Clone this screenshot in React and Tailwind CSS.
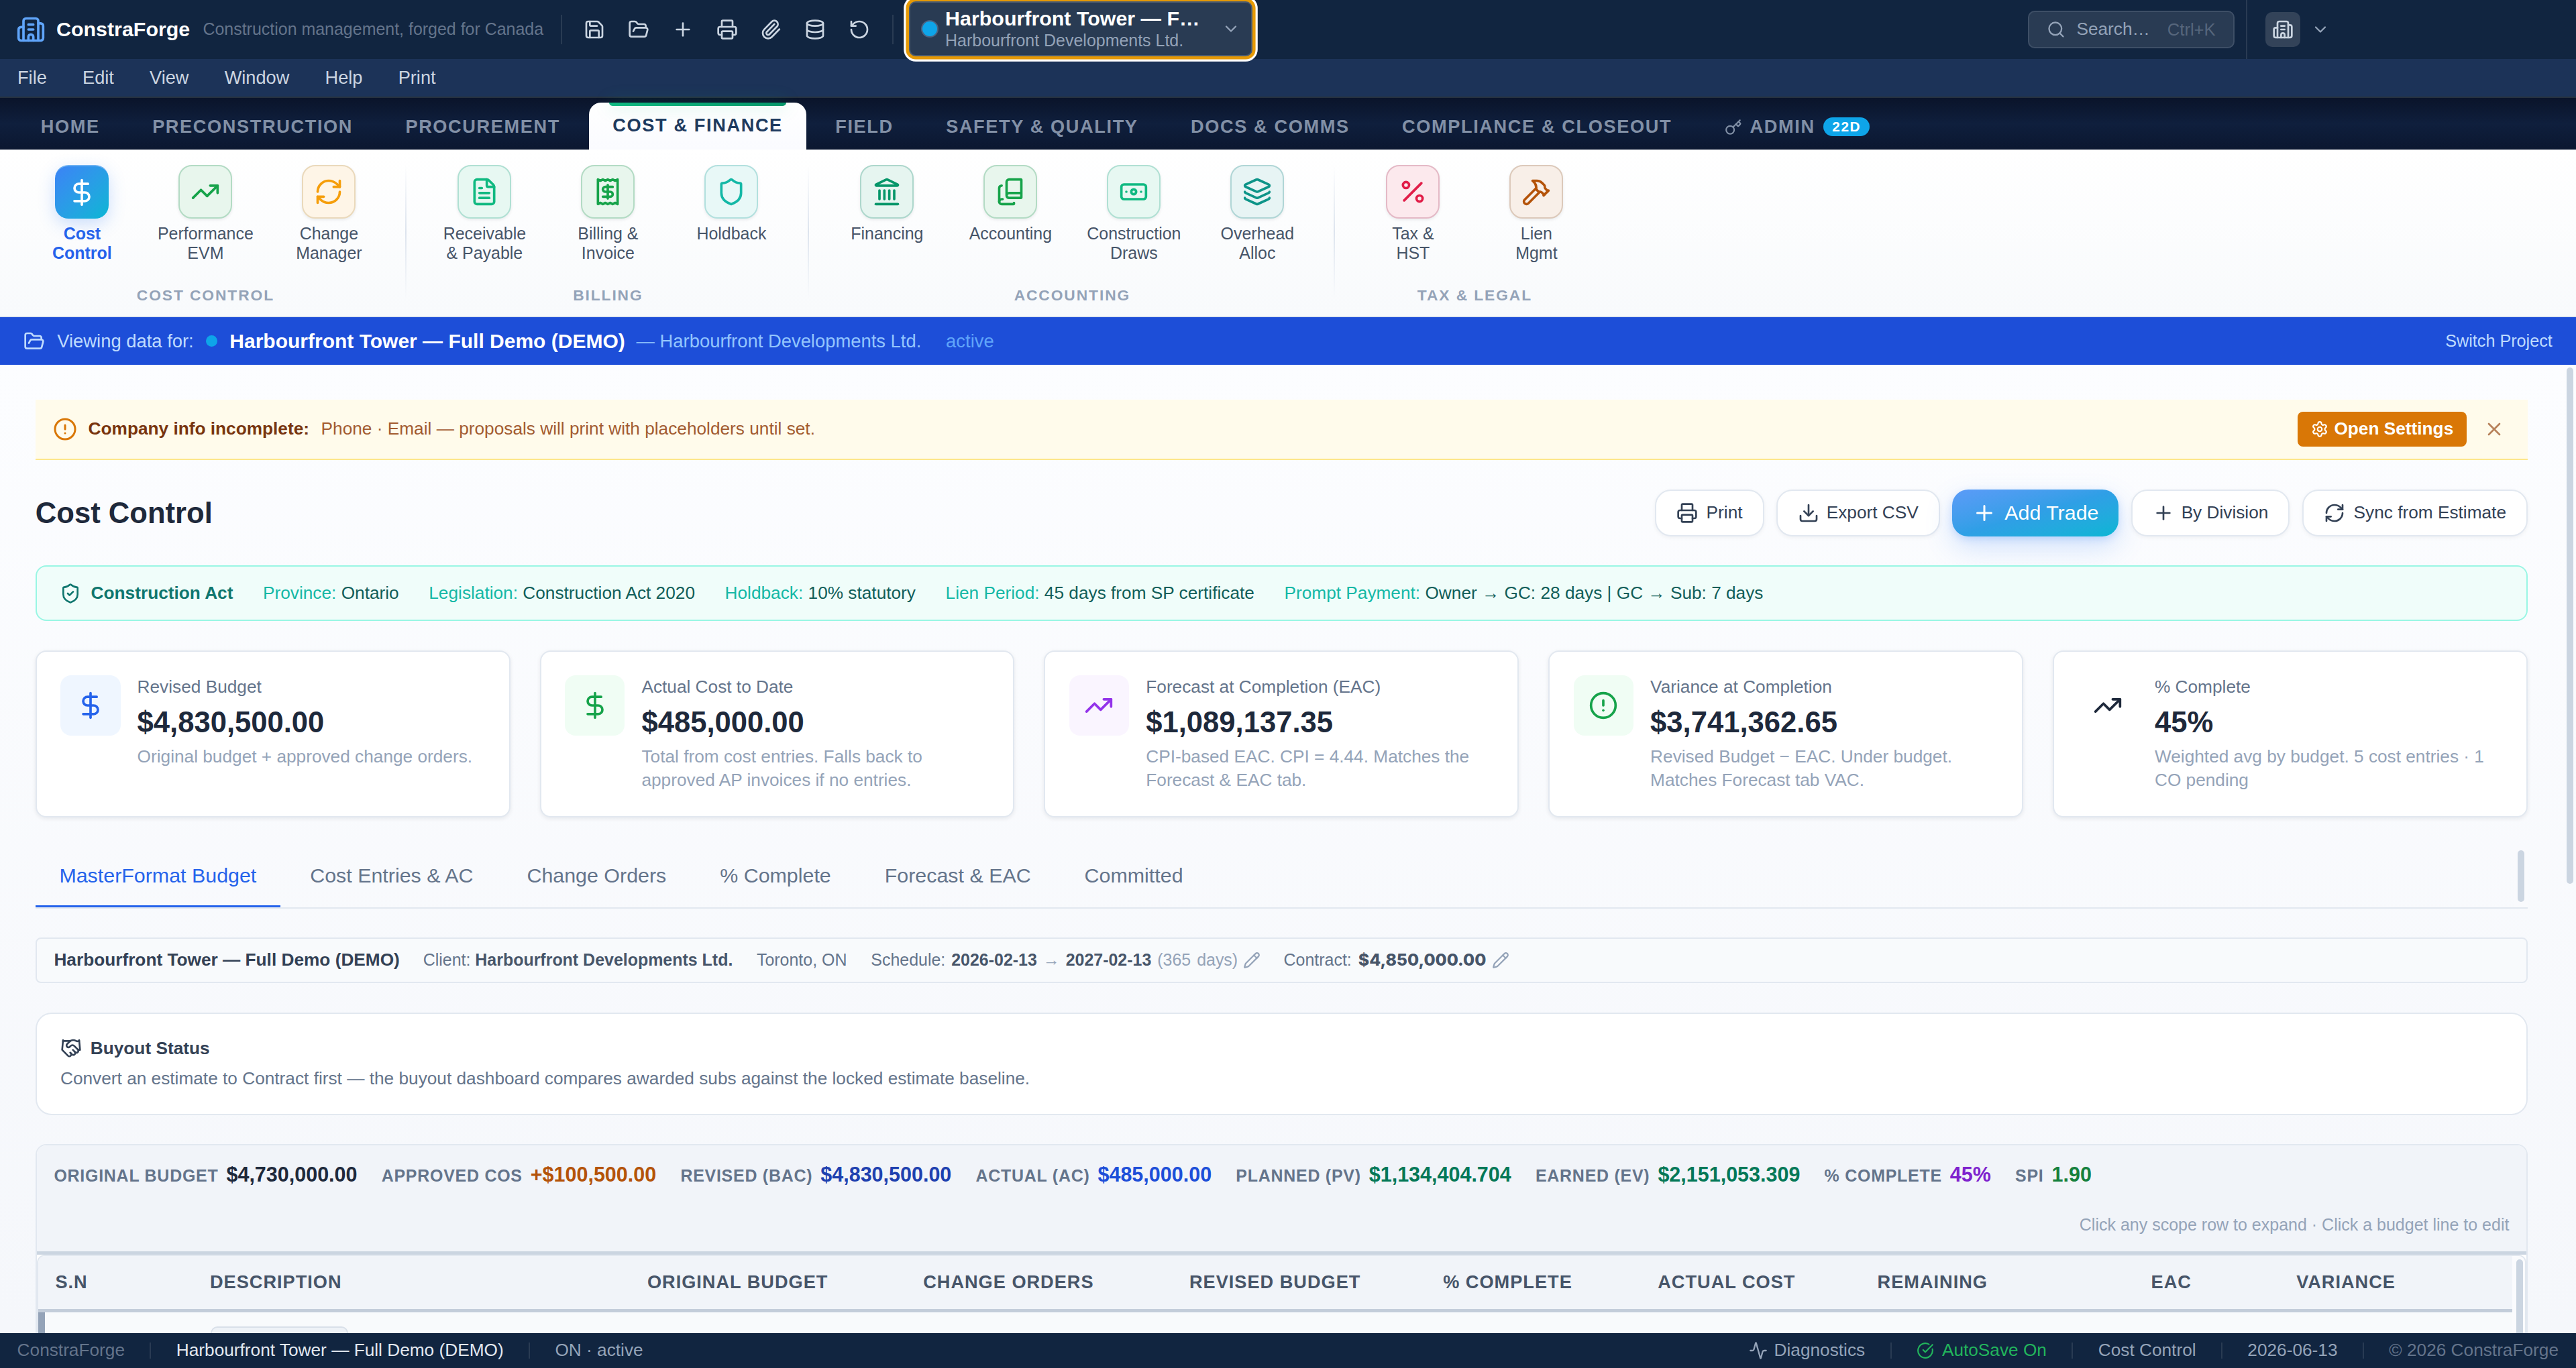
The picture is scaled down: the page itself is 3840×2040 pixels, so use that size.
import React from "react";
import {
  Building2, Save, FolderOpen, Plus, Printer, Paperclip, Database, RotateCcw, ChevronDown, Search, Key,
  DollarSign, TrendingUp, RefreshCw, FileText, Receipt, Shield, Landmark, BookCopy, Banknote, Layers,
  Percent, Hammer, CircleAlert, Settings, X, Download, ShieldCheck, Pencil, Handshake, Activity, CircleCheckBig,
} from "lucide-react";

const quickActions = [Save, FolderOpen, Plus, Printer, Paperclip, Database, RotateCcw];
const menus = ["File", "Edit", "View", "Window", "Help", "Print"];

const ribbon = [
  {
    label: "COST CONTROL",
    items: [
      { icon: DollarSign, lines: ["Cost", "Control"], active: true },
      { icon: TrendingUp, lines: ["Performance", "EVM"], tone: "text-[#16a34a] bg-[#e8f6ed] border-[#b3dbc4]" },
      { icon: RefreshCw, lines: ["Change", "Manager"], tone: "text-[#f59e0b] bg-[#fef5e7] border-[#ead9bb]" },
    ],
  },
  {
    label: "BILLING",
    items: [
      { icon: FileText, lines: ["Receivable", "& Payable"], tone: "text-[#10b981] bg-[#e7f8f2] border-[#b0e0d3]" },
      { icon: Receipt, lines: ["Billing &", "Invoice"], tone: "text-[#16a34a] bg-[#e8f6ed] border-[#b3dbc4]" },
      { icon: Shield, lines: ["Holdback"], tone: "text-[#14b8a6] bg-[#e8f8f7] border-[#b2e0de]" },
    ],
  },
  {
    label: "ACCOUNTING",
    items: [
      { icon: Landmark, lines: ["Financing"], tone: "text-[#059669] bg-[#e6f5f0] border-[#add7cc]" },
      { icon: BookCopy, lines: ["Accounting"], tone: "text-[#16a34a] bg-[#e8f6ed] border-[#b3dbc4]" },
      { icon: Banknote, lines: ["Construction", "Draws"], tone: "text-[#10b981] bg-[#e7f8f2] border-[#b0e0d3]" },
      { icon: Layers, lines: ["Overhead", "Alloc"], tone: "text-[#0d9488] bg-[#e7f4f4] border-[#b0d6d6]" },
    ],
  },
  {
    label: "TAX & LEGAL",
    items: [
      { icon: Percent, lines: ["Tax &", "HST"], tone: "text-[#e11d48] bg-[#fce9ed] border-[#e4b9c6]" },
      { icon: Hammer, lines: ["Lien", "Mgmt"], tone: "text-[#b45309] bg-[#f8efe8] border-[#dcc9ba]" },
    ],
  },
];

const stats = [
  { icon: DollarSign, tone: "bg-[#eff6ff] text-[#2563eb]", label: "Revised Budget", value: "$4,830,500.00", note: "Original budget + approved change orders." },
  { icon: DollarSign, tone: "bg-[#f0fdf4] text-[#16a34a]", label: "Actual Cost to Date", value: "$485,000.00", note: "Total from cost entries. Falls back to approved AP invoices if no entries." },
  { icon: TrendingUp, tone: "bg-[#faf5ff] text-[#9333ea]", label: "Forecast at Completion (EAC)", value: "$1,089,137.35", note: "CPI-based EAC. CPI = 4.44. Matches the Forecast & EAC tab." },
  { icon: CircleAlert, tone: "bg-[#f0fdf4] text-[#16a34a]", label: "Variance at Completion", value: "$3,741,362.65", note: "Revised Budget − EAC. Under budget. Matches Forecast tab VAC." },
  { icon: TrendingUp, tone: "text-[#1e293b]", label: "% Complete", value: "45%", note: "Weighted avg by budget. 5 cost entries · 1 CO pending" },
];

const act = [
  ["Province:", "Ontario"],
  ["Legislation:", "Construction Act 2020"],
  ["Holdback:", "10% statutory"],
  ["Lien Period:", "45 days from SP certificate"],
  ["Prompt Payment:", "Owner → GC: 28 days | GC → Sub: 7 days"],
];

const totals = [
  ["ORIGINAL BUDGET", "$4,730,000.00", "text-[#1e293b]"],
  ["APPROVED COS", "+$100,500.00", "text-[#b45309]"],
  ["REVISED (BAC)", "$4,830,500.00", "text-[#1e40af]"],
  ["ACTUAL (AC)", "$485,000.00", "text-[#1d4ed8]"],
  ["PLANNED (PV)", "$1,134,404.704", "text-[#047857]"],
  ["EARNED (EV)", "$2,151,053.309", "text-[#047857]"],
  ["% COMPLETE", "45%", "text-[#7e22ce]"],
  ["SPI", "1.90", "text-[#15803d]"],
];

const columns = ["ORIGINAL BUDGET", "CHANGE ORDERS", "REVISED BUDGET", "% COMPLETE", "ACTUAL COST", "REMAINING", "EAC", "VARIANCE"];

function TitleBar() {
  return (
    <header className="relative z-10 flex h-[44px] shrink-0 items-center bg-[#112540] pl-[12px]">
      <Building2 size={22} className="shrink-0 text-[#60a5fa]" />
      <span className="ml-[8px] text-[15.2px] font-bold text-white">ConstraForge</span>
      <span className="ml-[9.6px] text-[12.48px] text-[#64748b]">Construction management, forged for Canada</span>
      <span className="ml-[13px] h-[22px] w-px bg-[#293b53]" />
      <div className="ml-[7.6px] flex">
        {quickActions.map((Icon, i) => (
          <span key={i} className="flex w-[32.9px] justify-center text-[#cbd5e1]">
            <Icon size={16} />
          </span>
        ))}
      </div>
      <span className="ml-[8px] h-[22px] w-px bg-[#293b53]" />
      <div className="ml-[11.6px] flex h-[41px] w-[256px] -translate-y-[0.5px] items-center rounded-[5px] border border-[#4b5b70] bg-[#293b53] pr-[8px] pl-[8px] shadow-[0_0_0_2.3px_#e69a05,0_0_0_3.9px_#fff]">
        <span className="size-[13px] rounded-full border border-[#4b6280] bg-[#0ea5e9]" />
        <div className="ml-[5px] flex flex-col">
          <span className="text-[15.2px] leading-[17px] font-bold text-white">Harbourfront Tower — F…</span>
          <span className="text-[12.48px] leading-[16px] text-[#94a3b8]">Harbourfront Developments Ltd.</span>
        </div>
        <ChevronDown size={14} className="ml-auto text-[#94a3b8]" />
      </div>
      <div className="ml-auto flex h-full items-center pr-[183.6px]">
        <div className="flex h-[28px] w-[154px] items-center rounded-[5px] border border-[#3e4f66] bg-[#293b53] pl-[13px]">
          <Search size={14} className="text-[#94a3b8]" />
          <span className="ml-[8.3px] text-[13.12px] text-[#94a3b8]">Search…</span>
          <span className="ml-[13px] text-[12.8px] text-[#56667c]">Ctrl+K</span>
        </div>
        <span className="ml-[8.6px] h-full w-px bg-[#293b53]" />
        <span className="ml-[13.4px] flex size-[26px] items-center justify-center rounded-[5px] bg-[#334359] text-[#cbd5e1]">
          <Building2 size={16} />
        </span>
        <ChevronDown size={14} className="ml-[8px] text-[#94a3b8]" />
      </div>
    </header>
  );
}

function Tab({ children }) {
  return <span className="flex h-[35px] items-center px-[17.6px] pt-[1px]">{children}</span>;
}

function Nav() {
  return (
    <nav className="flex h-[39.5px] shrink-0 items-end gap-[4px] border-t border-[#27323f] bg-linear-to-b from-[#0a142a] via-[#0f1f3d] to-[#0b1730] pl-[12.8px] text-[13.6px] font-bold tracking-[0.8px] text-[#8290a6]">
      <Tab>HOME</Tab>
      <Tab>PRECONSTRUCTION</Tab>
      <Tab>PROCUREMENT</Tab>
      <span className="relative flex h-[35px] items-center rounded-t-[9px] bg-linear-to-b from-white to-[#fafbff] px-[17.6px] pb-[1px] text-[#1e3a5f]">
        <span className="absolute inset-x-[15px] top-0 h-[2.4px] rounded-b-[3px] bg-linear-to-r from-[#10b981] to-[#059669] shadow-[0_0_12px_rgba(16,185,129,0.35)]" />
        COST &amp; FINANCE
      </span>
      <Tab>FIELD</Tab>
      <Tab>SAFETY &amp; QUALITY</Tab>
      <Tab>DOCS &amp; COMMS</Tab>
      <Tab>COMPLIANCE &amp; CLOSEOUT</Tab>
      <Tab>
        <Key size={13} className="mt-px mr-[6px]" />
        ADMIN
        <span className="ml-[6.4px] flex h-[14px] items-center rounded-full bg-[#0ea5e9] px-[6.4px] text-[10.4px] tracking-[0.8px] text-white">22D</span>
      </Tab>
    </nav>
  );
}

function RibbonItem({ icon: Icon, lines, tone, active }) {
  return (
    <div className="flex w-[88px] flex-col items-center">
      {active ? (
        <span className="flex size-[40px] items-center justify-center rounded-[10px] border-t border-[#6bb0f2] bg-linear-to-br from-[#3b82f6] to-[#06b6d4] text-white shadow-[0_4px_12px_rgba(59,130,246,0.25)]">
          <Icon size={22} />
        </span>
      ) : (
        <span className={`flex size-[40px] items-center justify-center rounded-[10px] border shadow-[0_1px_2px_rgba(15,23,42,0.08)] ${tone}`}>
          <Icon size={22} />
        </span>
      )}
      <span className={`mt-[4px] flex flex-col items-center text-[12.48px] leading-[14.5px] ${active ? "font-bold text-[#2563eb]" : "text-[#475569]"}`}>
        {lines.map((l) => (
          <span key={l}>{l}</span>
        ))}
      </span>
    </div>
  );
}

function Ribbon() {
  return (
    <section className="flex h-[125px] shrink-0 border-b border-[#e2e8f0] bg-linear-to-b from-white to-[#f8fafc] pt-[11.5px] pl-[3.2px]">
      {ribbon.map((g, i) => (
        <div key={g.label} className="flex">
          <div className="flex flex-col items-center px-[14px]">
            <div className="flex h-[93px] gap-[4px]">
              {g.items.map((it) => (
                <RibbonItem key={it.lines[0]} {...it} />
              ))}
            </div>
            <span className="mt-[-3px] text-[11.4px] leading-[14px] font-bold tracking-[0.95px] text-[#94a3b8]">{g.label}</span>
          </div>
          {i < ribbon.length - 1 && <span className="-ml-px h-[100px] w-px bg-linear-to-b from-transparent via-[#dde4ee] to-transparent" />}
        </div>
      ))}
    </section>
  );
}

function ProjectBar() {
  return (
    <div className="flex h-[35.5px] shrink-0 items-center bg-[#1d4ed8] pr-[17.6px] pl-[17.6px] text-[13.7px] text-[#bfdbfe]">
      <FolderOpen size={16} />
      <span className="ml-[9px]">Viewing data for:</span>
      <span className="ml-[9px] size-[8.8px] rounded-full bg-[#0ea5e9]" />
      <span className="ml-[9px] text-[15px] font-bold text-white">Harbourfront Tower — Full Demo (DEMO)</span>
      <span className="ml-[8.4px] text-[#93c5fd]">— Harbourfront Developments Ltd.</span>
      <span className="ml-[18.4px] text-[#60a5fa]">active</span>
      <span className="ml-auto text-[12.6px] text-[#bfdbfe]">Switch Project</span>
    </div>
  );
}

function Notice() {
  return (
    <div className="flex h-[45px] items-center border-b border-[#fde68a] bg-[#fffbeb] pr-[12.8px] pl-[13.1px] text-[13.12px]">
      <CircleAlert size={18} className="text-[#d97706]" />
      <span className="ml-[8.3px] font-bold text-[#78350f]">Company info incomplete:</span>
      <span className="ml-[8.8px] text-[#92400e] opacity-85">Phone · Email — proposals will print with placeholders until set.</span>
      <span className="ml-auto flex h-[26px] items-center rounded-[4px] bg-[#d97706] px-[10px] font-bold text-white">
        <Settings size={13} className="mr-[4px]" />
        Open Settings
      </span>
      <X size={16} className="mr-[4px] ml-[12.6px] text-[#92400e] opacity-65" />
    </div>
  );
}

function Button({ icon: Icon, tight, children }) {
  return (
    <span className={`flex h-[35px] items-center rounded-[12px] border border-[#e2e8f0] bg-white px-[15px] text-[13.12px] text-[#334155] shadow-[0_1px_3px_rgba(15,23,42,0.05)] ${tight ? "gap-[5.4px]" : "gap-[6.4px]"}`}>
      <Icon size={16} />
      {children}
    </span>
  );
}

function Heading() {
  return (
    <div className="mt-[22px] flex h-[35px] items-center gap-[9.2px]">
      <h1 className="mr-auto text-[21.8px] leading-[26px] font-bold text-[#1e293b]">Cost Control</h1>
      <Button icon={Printer}>Print</Button>
      <Button icon={Download} tight>Export CSV</Button>
      <span className="flex h-[35px] items-center gap-[6px] rounded-[12px] bg-linear-to-br from-[#5b9bf8] from-0% via-[#2f9fe6] to-[#06b6d4] px-[15px] text-[15.2px] text-white shadow-[0_8px_20px_rgba(59,130,246,0.22),0_2px_6px_rgba(59,130,246,0.2)]">
        <Plus size={18} />
        Add Trade
      </span>
      <Button icon={Plus} tight>By Division</Button>
      <Button icon={RefreshCw}>Sync from Estimate</Button>
    </div>
  );
}

function StatCard({ icon: Icon, tone, label, value, note }) {
  return (
    <div className="flex h-[124.5px] flex-1 gap-[12.5px] rounded-[8px] border border-[#e2e8f0] bg-white p-[17.6px] shadow-[0_1px_3px_rgba(15,23,42,0.08)]">
      <span className={`flex size-[44.8px] shrink-0 items-center justify-center rounded-[8px] ${tone}`}>
        <Icon size={22} />
      </span>
      <div className="min-w-0 flex-1 pt-[0.5px]">
        <div className="text-[13.12px] leading-[16px] text-[#64748b]">{label}</div>
        <div className="mt-[5.3px] text-[21.8px] leading-[26px] font-bold text-[#1e293b]">{value}</div>
        <div className="mt-[4px] text-[13.12px] leading-[17.7px] text-[#94a3b8]">{note}</div>
      </div>
    </div>
  );
}

function Tabs() {
  return (
    <div className="mt-[22px] flex h-[46px] justify-between border-b border-[#e2e8f0] text-[15.2px] text-[#64748b]">
      <div className="flex gap-[4.4px]">
        <span className="flex h-full items-center border-b-[1.5px] border-[#2563eb] px-[17.8px] pb-[1px] text-[#2563eb]">MasterFormat Budget</span>
        {["Cost Entries & AC", "Change Orders", "% Complete", "Forecast & EAC", "Committed"].map((t) => (
          <span key={t} className="flex h-full items-center px-[17.8px] pb-[2.5px]">{t}</span>
        ))}
      </div>
      <div className="w-[10px] bg-[#f9fafd] pt-[2.5px]">
        <div className="ml-[2.6px] h-[38.5px] w-[5px] rounded-full bg-[#cbd5e1]" />
      </div>
    </div>
  );
}

function InfoRow() {
  return (
    <div className="mt-[21.5px] flex h-[34px] items-center rounded-[4px] border border-[#e2e8f0] bg-[#f8fafc] pl-[12.8px] text-[12.48px] text-[#64748b]">
      <span className="text-[13.12px] font-bold text-[#334155]">Harbourfront Tower — Full Demo (DEMO)</span>
      <span className="ml-[17.4px]">Client: <b className="text-[#475569]">Harbourfront Developments Ltd.</b></span>
      <span className="ml-[17.8px]">Toronto, ON</span>
      <span className="ml-[17.9px] [word-spacing:1px]">
        Schedule: <b className="text-[#475569]">2026-02-13</b> <span className="text-[#94a3b8]">→</span> <b className="text-[#475569]">2027-02-13</b> <span className="text-[#94a3b8]">(365 days)</span>
      </span>
      <Pencil size={13} className="ml-[4px] text-[#94a3b8]" />
      <span className="ml-[17.2px]">Contract: </span>
      <span className="ml-[5px] font-[Inter] text-[12.4px] font-extrabold text-[#475569]">$4,850,000.00</span>
      <Pencil size={13} className="ml-[4.5px] text-[#94a3b8]" />
    </div>
  );
}

function BudgetTable() {
  return (
    <div className="mt-[21.6px] flex min-h-0 flex-1 flex-col rounded-t-[8px] border border-b-0 border-[#e2e8f0] bg-white">
      <div className="flex h-[81.5px] shrink-0 flex-col rounded-t-[7px] border-b-[2.5px] border-[#cbd5e1] bg-[#f1f4f9] px-[12.8px]">
        <div className="mt-[10.6px] flex h-[19px] items-baseline gap-[18.1px]">
          {totals.map(([k, v, tone]) => (
            <span key={k} className="flex items-baseline text-[12.48px] font-bold tracking-[0.03em] text-[#64748b]">
              {k}
              <span className={`ml-[6px] text-[15.25px] tracking-normal ${tone}`}>{v}</span>
            </span>
          ))}
        </div>
        <span className="mt-[21.5px] self-end text-[12.5px] leading-[16px] text-[#94a3b8]">Click any scope row to expand · Click a budget line to edit</span>
      </div>
      <div className="flex min-h-0 flex-1 overflow-hidden rounded-t-[6px] border-x border-t border-[#e2e8f0]">
        <div className="flex min-w-0 flex-1 flex-col">
          <div className="grid h-[42.2px] shrink-0 grid-cols-[114.7px_486.9px_198.1px_198.9px_157.7px_166.3px_143.3px_152px_1fr] items-center border-b-[2.6px] border-[#c3cdda] bg-[#f1f4f9] text-[13.6px] font-bold tracking-[0.036em] text-[#475569]">
            <span className="pl-[12.8px]">S.N</span>
            <span className="flex justify-between pr-[12.8px] pl-[13.4px]">
              <span>DESCRIPTION</span>
              <span>{columns[0]}</span>
            </span>
            {columns.slice(1, 7).map((c) => (
              <span key={c} className="pr-[12.8px] text-right">{c}</span>
            ))}
            <span className="w-[152px] pr-[12.8px] text-right">{columns[7]}</span>
          </div>
          <div className="flex-1 overflow-hidden border-l-[5px] border-[#94a3b8] bg-[#f8fafc] pt-[10.5px] pl-[123.5px]">
            <div className="h-[24px] w-[102.4px] rounded-[5px] border border-[#d9e0e9] bg-[#eef2f7]" />
          </div>
        </div>
        <div className="w-[9.6px] bg-[#fafbfd] pt-[2.5px]">
          <div className="ml-[3px] h-full w-[5px] rounded-t-full bg-[#cbd5e1]" />
        </div>
      </div>
    </div>
  );
}

function Sep() {
  return <span className="mx-[18.7px] h-[12px] w-px bg-[#293b53]" />;
}

function StatusBar() {
  return (
    <footer className="flex h-[26px] shrink-0 items-center bg-[#112540] pr-[13px] pl-[12.8px] text-[13.12px] text-[#94a3b8]">
      <span className="text-[#64748b]">ConstraForge</span>
      <Sep />
      <span className="text-[#e2e8f0]">Harbourfront Tower — Full Demo (DEMO)</span>
      <Sep />
      <span>ON · active</span>
      <span className="ml-auto flex items-center gap-[5px]"><Activity size={14} />Diagnostics</span>
      <Sep />
      <span className="flex items-center gap-[6px] text-[#22b45c]"><CircleCheckBig size={13} />AutoSave On</span>
      <Sep />
      <span>Cost Control</span>
      <Sep />
      <span>2026-06-13</span>
      <Sep />
      <span className="text-[#64748b]">© 2026 ConstraForge</span>
    </footer>
  );
}

export default function App() {
  return (
    <div className="flex h-[1020px] w-[1920px] flex-col overflow-hidden font-['Liberation_Sans',Arial,sans-serif] leading-normal whitespace-nowrap [zoom:2]">
      <TitleBar />
      <div className="flex h-[28px] shrink-0 items-center gap-[26.6px] bg-[#1c3358] pl-[13px] text-[13.6px] text-[#cbd5e1]">
        {menus.map((m) => (
          <span key={m}>{m}</span>
        ))}
      </div>
      <Nav />
      <Ribbon />
      <ProjectBar />
      <div className="flex min-h-0 flex-1 bg-linear-to-b from-[#fcfdff] to-[#f5f7fb]">
        <main className="flex min-w-0 flex-1 flex-col pt-[26px] pr-[26.4px] pl-[26.4px]">
          <Notice />
          <Heading />
          <div className="mt-[21.5px] flex h-[41.5px] shrink-0 items-center gap-[22.3px] rounded-[8px] border border-[#99f6e4] bg-[#f0fdfa] pl-[17px] text-[13.12px] text-[#115e59]">
            <span className="flex items-center gap-[7.4px] font-bold text-[#0f766e]"><ShieldCheck size={16} />Construction Act</span>
            {act.map(([k, v]) => (
              <span key={k}><span className="text-[#14b8a6]">{k}</span> {v}</span>
            ))}
          </div>
          <div className="mt-[22px] flex shrink-0 gap-[22px] whitespace-normal">
            {stats.map((s) => (
              <StatCard key={s.label} {...s} />
            ))}
          </div>
          <Tabs />
          <InfoRow />
          <div className="mt-[22px] h-[76.4px] shrink-0 rounded-[12px] border border-[#e2e8f0] bg-white p-[17.6px]">
            <div className="flex h-[16px] items-center gap-[6.4px] text-[13.12px] leading-[16px] font-bold text-[#334155]"><Handshake size={16} />Buyout Status</div>
            <div className="mt-[4.8px] text-[13.12px] leading-[19.7px] text-[#64748b]">Convert an estimate to Contract first — the buyout dashboard compares awarded subs against the locked estimate baseline.</div>
          </div>
          <BudgetTable />
        </main>
        <div className="w-[9.6px] shrink-0 pt-[2px]">
          <div className="ml-[2.4px] h-[385px] w-[5px] rounded-full bg-[#cbd5e1]" />
        </div>
      </div>
      <StatusBar />
    </div>
  );
}
